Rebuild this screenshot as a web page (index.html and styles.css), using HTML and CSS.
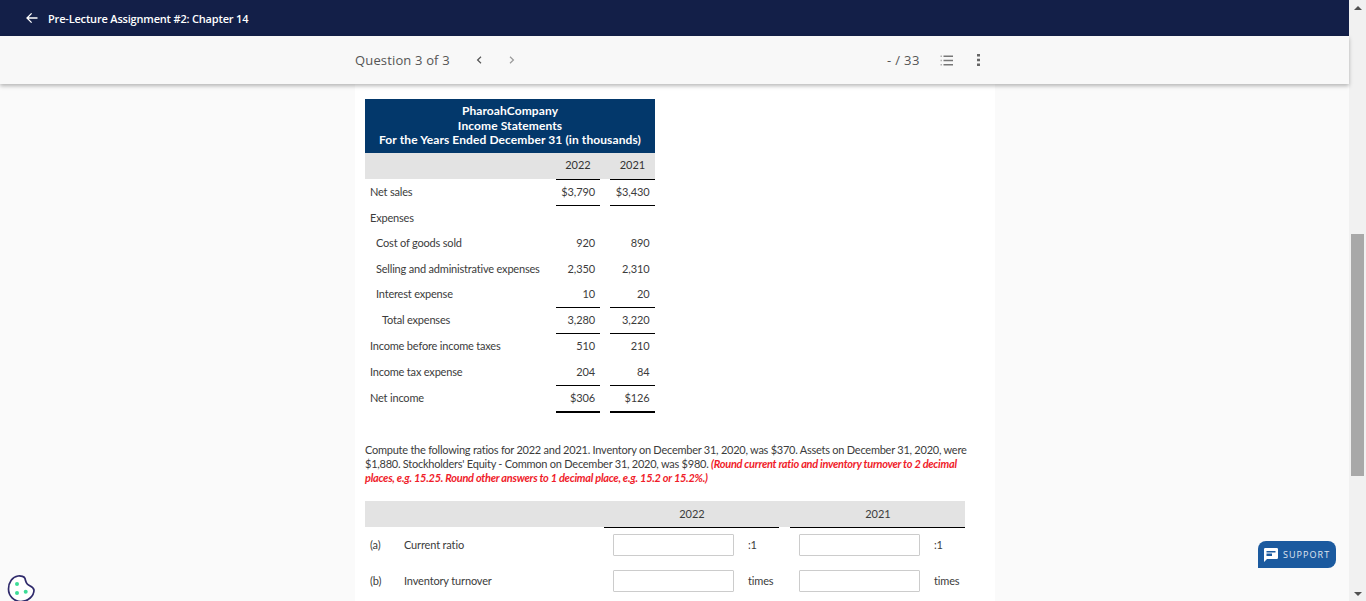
FILE: index.html
```html
<!DOCTYPE html>
<html lang="en">
<head>
<meta charset="utf-8">
<title>Pre-Lecture Assignment #2: Chapter 14</title>
<link rel="stylesheet" href="styles.css">
</head>
<body>
<div class="app">
  <div class="main">
    <header class="topbar">
      <svg class="back" viewBox="0 0 12 12" width="12" height="12"><path d="M11.500 6H1.200M5.600 1.400 1 6l4.600 4.600" fill="none" stroke="#fff" stroke-width="1.300"/></svg>
      <span class="assignment">Pre-Lecture Assignment #2: Chapter 14</span>
    </header>
    <div class="qbar">
      <div class="qbar-inner">
        <span class="qcount">Question 3 of 3</span>
        <svg class="chev-prev" viewBox="0 0 6 8" width="6" height="8"><path d="M5 .8 1.600 4 5 7.200" fill="none" stroke="#555" stroke-width="1.200"/></svg>
        <svg class="chev-next" viewBox="0 0 6 8" width="6" height="8"><path d="M1 .8 4.400 4 1 7.200" fill="none" stroke="#999" stroke-width="1.200"/></svg>
        <span class="score">- / 33</span>
        <svg class="list-icon" viewBox="0 0 13 11" width="13" height="11"><path d="M3.500 1.200H13M3.500 5.500H13M3.500 9.800H13" stroke="#777" stroke-width="1.500"/><path d="M.5 .5h1.400v1.400H.5zM.5 4.800h1.400v1.400H.5zM.5 9.100h1.400v1.400H.5z" fill="#aaa"/></svg>
        <svg class="more-icon" viewBox="0 0 3 12" width="3" height="12"><path d="M0 0h3v2.600H0zM0 4.700h3v2.600H0zM0 9.400h3V12H0z" fill="#666"/></svg>
      </div>
    </div>
    <main class="content">
      <section class="statement">
        <div class="st-title">PharoahCompany<br>Income Statements<br>For the Years Ended December 31 (in thousands)</div>
        <div class="st-row st-head"><span></span><span class="year">2022</span><span class="year">2021</span></div>
        <div class="st-row tall"><span>Net sales</span><span class="num rule-t rule-b">$3,790</span><span class="num rule-t rule-b">$3,430</span></div>
        <div class="st-row tight"><span>Expenses</span><span class="num"></span><span class="num"></span></div>
        <div class="st-row tight"><span class="ind1">Cost of goods sold</span><span class="num">920</span><span class="num">890</span></div>
        <div class="st-row tight"><span class="ind1">Selling and administrative expenses</span><span class="num">2,350</span><span class="num">2,310</span></div>
        <div class="st-row tight"><span class="ind1">Interest expense</span><span class="num rule-b">10</span><span class="num rule-b">20</span></div>
        <div class="st-row"><span class="ind2">Total expenses</span><span class="num rule-b">3,280</span><span class="num rule-b">3,220</span></div>
        <div class="st-row"><span>Income before income taxes</span><span class="num">510</span><span class="num">210</span></div>
        <div class="st-row"><span>Income tax expense</span><span class="num rule-b">204</span><span class="num rule-b">84</span></div>
        <div class="st-row tall net"><span>Net income</span><span class="num rule-bb">$306</span><span class="num rule-bb">$126</span></div>
      </section>
      <p class="prompt">Compute the following ratios for 2022 and 2021. Inventory on December 31, 2020, was $370. Assets on December 31, 2020, were $1,880. Stockholders' Equity - Common on December 31, 2020, was $980. <em class="note">(Round current ratio and inventory turnover to 2 decimal places, e.g. 15.25. Round other answers to 1 decimal place, e.g. 15.2 or 15.2%.)</em></p>
      <section class="ratios">
        <div class="ra-head"><span></span><span class="ra-year">2022</span><span class="ra-year">2021</span></div>
        <div class="ra-row">
          <span class="ra-key">(a)</span><span class="ra-name">Current ratio</span>
          <span class="ra-cell"><input class="ra-input" type="text"><span class="ra-unit">:1</span></span>
          <span class="ra-cell"><input class="ra-input" type="text"><span class="ra-unit">:1</span></span>
        </div>
        <div class="ra-row">
          <span class="ra-key">(b)</span><span class="ra-name">Inventory turnover</span>
          <span class="ra-cell"><input class="ra-input" type="text"><span class="ra-unit">times</span></span>
          <span class="ra-cell"><input class="ra-input" type="text"><span class="ra-unit">times</span></span>
        </div>
      </section>
    </main>
  </div>
  <div class="scrollbar">
    <span class="sb-up"></span>
    <div class="sb-track"><div class="sb-thumb"></div></div>
    <span class="sb-down"></span>
  </div>
</div>
<button class="support" type="button">
  <svg viewBox="0 0 14 14" width="14" height="14"><path d="M1.200 0h11.600A1.200 1.200 0 0 1 14 1.200v8.600a1.200 1.200 0 0 1-1.200 1.200H3l-3 3V1.200A1.200 1.200 0 0 1 1.200 0z" fill="#fff"/><path d="M2.500 3h9v1.500h-9zM2.500 5.500h5.500V8H2.500z" fill="#1b5a9f"/></svg>
  <span class="support-label">SUPPORT</span>
</button>
<svg class="cookie" viewBox="0 0 28 28" width="28" height="28"><path d="M11 2C14 1.600 17.500 2.500 18 4.500 18.500 7 19.500 10 21.500 11 23 12 26.500 13 27 16 27 22 21 27.500 14 27.500 7 27.500 1.500 22 1.500 15 1.500 8 5.500 2.800 11 2Z" fill="#fff" stroke="#2f2a6b" stroke-width="1.700"/><circle cx="10" cy="10" r="2" fill="#3ddc97"/><circle cx="10" cy="19" r="2" fill="#3ddc97"/><circle cx="18.700" cy="17.700" r="2" fill="#3ddc97"/></svg>
</body>
</html>
```

FILE: styles.css
```css
* { box-sizing: border-box; }
html, body { margin: 0; height: 100%; overflow: hidden; }
body { font-family: Lato, "Liberation Sans", sans-serif; color: #3c3c3c; background: #fafafa; }
.app { display: flex; height: 601px; }
.main { flex: 1; min-width: 0; display: flex; flex-direction: column; }

.topbar { height: 36px; flex: none; background: #131f48; display: flex; align-items: center; padding-left: 26px; gap: 10px; }
.back { margin-top: -1px; }
.assignment { font-family: "Open Sans", sans-serif; font-weight: 600; font-size: 11px; color: #fff; letter-spacing: -.18px; }

.qbar { height: 48px; flex: none; background: #f8f8f8; box-shadow: 0 2px 4px rgba(0,0,0,.28); position: relative; z-index: 1; }
.qbar-inner { width: 640px; margin-left: 355px; height: 100%; display: flex; align-items: center; }
.qcount { font-family: "Open Sans", sans-serif; font-size: 13px; letter-spacing: .15px; color: #555; width: 121px; }
.chev-prev { margin-right: 27px; }
.score { font-family: "Open Sans", sans-serif; font-size: 13px; letter-spacing: .35px; color: #555; margin-left: 372px; width: 53px; }
.list-icon { margin-right: 24px; }

.content { width: 640px; margin-left: 355px; flex: 1; background: #fff; padding: 15px 10px 0; overflow: hidden; }

.statement { width: 290px; font-size: 11px; letter-spacing: -.19px; }
.st-title { background: #03386b; color: #fff; font-weight: 700; font-size: 12px; letter-spacing: .1px; line-height: 14.5px; text-align: center; height: 54px; padding-top: 5px; }
.st-row { display: grid; grid-template-columns: 176px 44px 45px; column-gap: 10px; height: 26px; align-items: center; padding-left: 5px; white-space: nowrap; }
.st-row.tight { height: 25.5px; }
.st-row.tall { height: 27px; }
.st-row > span { display: flex; align-items: center; height: 100%; padding-bottom: 3px; }
.st-row.net > span:first-child { padding-bottom: 4px; }
.st-head { background: #e3e3e3; }
.st-head .year { justify-content: center; color: #333; letter-spacing: 0; }
.ind1 { padding-left: 6px; }
.ind2 { padding-left: 12px; }
.st-row > .num { justify-content: flex-end; padding-right: 5px; letter-spacing: -.1px; border-top: 1px solid transparent; border-bottom: 1px solid transparent; }
.st-row > .num:last-child { padding-right: 5.500px; }
.st-row > .rule-t { border-top-color: #000; }
.st-row > .rule-b { border-bottom-color: #000; }
.st-row > .rule-bb { border-bottom: 2px solid #000; }

.prompt { margin: 30px 0 0; width: 610px; font-size: 11px; line-height: 14px; letter-spacing: -.245px; }
.note { color: #f01c2a; font-weight: 700; font-style: italic; letter-spacing: -.27px; }

.ratios { margin-top: 16px; width: 600px; font-size: 11px; letter-spacing: -.15px; }
.ra-head { display: grid; grid-template-columns: 228px 175px 175px; column-gap: 11px; background: #e3e3e3; height: 26px; align-items: start; }
.ra-year { display: flex; align-items: center; justify-content: center; border-bottom: 1px solid #000; height: 27px; padding: 0 0 1px 1px; letter-spacing: 0; }
.ra-row { display: grid; grid-template-columns: 34px 200px 175px 175px; height: 36px; align-items: center; padding-left: 5px; }
.ra-key, .ra-name { margin-bottom: 2px; }
.ra-row .ra-cell:last-child { margin-left: 11px; }
.ra-cell { display: flex; align-items: center; padding-left: 9px; }
.ra-input { width: 121px; height: 22px; border: 1px solid #ccc; border-radius: 1px; background: #fff; padding: 0; margin: 0; flex: none; }
.ra-unit { margin: 0 0 2px 14px; }

.scrollbar { width: 17px; flex: none; background: #f1f1f1; display: flex; flex-direction: column; align-items: center; }
.sb-up, .sb-down { width: 0; height: 0; border-left: 4px solid transparent; border-right: 4px solid transparent; flex: none; }
.sb-up { border-bottom: 4px solid #505050; margin: 6px 0; }
.sb-down { border-top: 4px solid #505050; margin: 6px 0 5px; }
.sb-track { flex: 1; width: 100%; padding-top: 218px; }
.sb-thumb { height: 242px; background: #a8a8a8; margin: 0 2px; }

.support { position: fixed; left: 1258px; top: 541px; width: 78px; height: 27px; background: #1b5a9f; color: #fff; border: 0; border-radius: 8px 8px 8px 0; display: flex; align-items: center; gap: 5px; padding: 0 0 0 6px; font-family: "Open Sans", sans-serif; font-size: 9px; letter-spacing: 1.05px; }
.support-label { opacity: .85; }
.cookie { position: fixed; left: 7px; top: 574px; }
```
